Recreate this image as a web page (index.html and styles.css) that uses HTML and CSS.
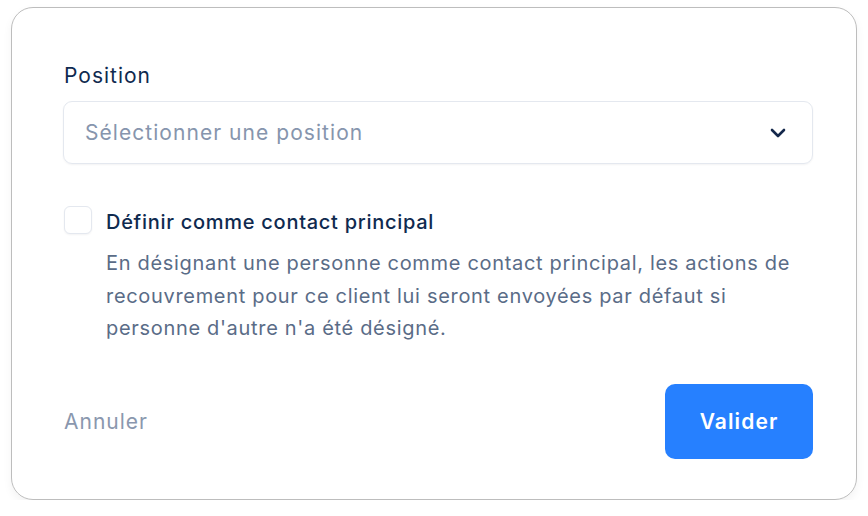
FILE: index.html
```html
<!DOCTYPE html>
<html lang="fr">
<head>
<meta charset="utf-8">
<link rel="stylesheet" href="styles.css">
</head>
<body>
<div class="card">
  <label class="field-label">Position</label>
  <div class="select">
    <span class="placeholder">Sélectionner une position</span>
    <svg class="chevron" width="16" height="10" viewBox="0 0 16 10"><path d="M2 2l6 6 6-6" fill="none" stroke="#14284b" stroke-width="2.6" stroke-linecap="round" stroke-linejoin="round"/></svg>
  </div>
  <div class="check-row">
    <span class="checkbox"></span>
    <div class="check-text">
      <div class="check-title">Définir comme contact principal</div>
      <p class="check-desc">En désignant une personne comme contact principal, les actions de recouvrement pour ce client lui seront envoyées par défaut si personne d'autre n'a été désigné.</p>
    </div>
  </div>
  <div class="actions">
    <button class="btn-cancel">Annuler</button>
    <button class="btn-primary">Valider</button>
  </div>
</div>
</body>
</html>
```
FILE: styles.css
```css
html, body { margin: 0; padding: 0; background: #ffffff; }
body { font-family: Inter, "Noto Sans", sans-serif; }
.card {
  box-sizing: border-box;
  margin: 7px 0 0 11px;
  width: 846px;
  height: 493px;
  border: 1.6px solid #bdbdbd;
  border-radius: 22px;
  padding: 54px 43px 0 52px;
  box-shadow: 0 4px 10px rgba(0,0,0,0.05);
  display: flex;
  flex-direction: column;
}
.field-label {
  font-size: 21px;
  letter-spacing: 1px;
  line-height: 28px;
  color: #0f2a4f;
}
.select {
  box-sizing: border-box;
  margin-top: 11px;
  margin-left: -1px;
  height: 63px;
  border: 1.5px solid #e4e8ef;
  border-radius: 9px;
  box-shadow: 0 1px 2px rgba(16,24,40,0.05);
  display: flex;
  align-items: center;
  justify-content: space-between;
  padding: 0 26px 0 21px;
}
.placeholder { font-size: 21px; letter-spacing: 1.05px; color: #8695ad; }
.chevron { display: block; }
.check-row {
  display: flex;
  gap: 14px;
  margin-top: 42px;
}
.checkbox {
  flex: none;
  box-sizing: border-box;
  width: 28px;
  height: 28px;
  border: 1.5px solid #e4e8ef;
  border-radius: 6px;
  background: #fff;
  box-shadow: 0 1px 2px rgba(16,24,40,0.05);
}
.check-title {
  font-size: 20px;
  font-weight: 500;
  letter-spacing: 0.72px;
  line-height: 32px;
  color: #0f2a4f;
}
.check-desc {
  margin: 9px 0 0;
  font-size: 20px;
  letter-spacing: 0.68px;
  line-height: 32.5px;
  color: #5a6c87;
}
.actions {
  display: flex;
  justify-content: space-between;
  align-items: center;
  margin-top: 39px;
}
.btn-cancel {
  background: none;
  border: none;
  padding: 0;
  font-family: inherit;
  font-size: 21px;
  letter-spacing: 1px;
  color: #8a97ae;
}
.btn-primary {
  width: 148px;
  height: 75px;
  border: none;
  border-radius: 10px;
  background: #2680ff;
  color: #fff;
  font-family: inherit;
  font-size: 21px;
  letter-spacing: 1.1px;
  font-weight: 600;
}
```
